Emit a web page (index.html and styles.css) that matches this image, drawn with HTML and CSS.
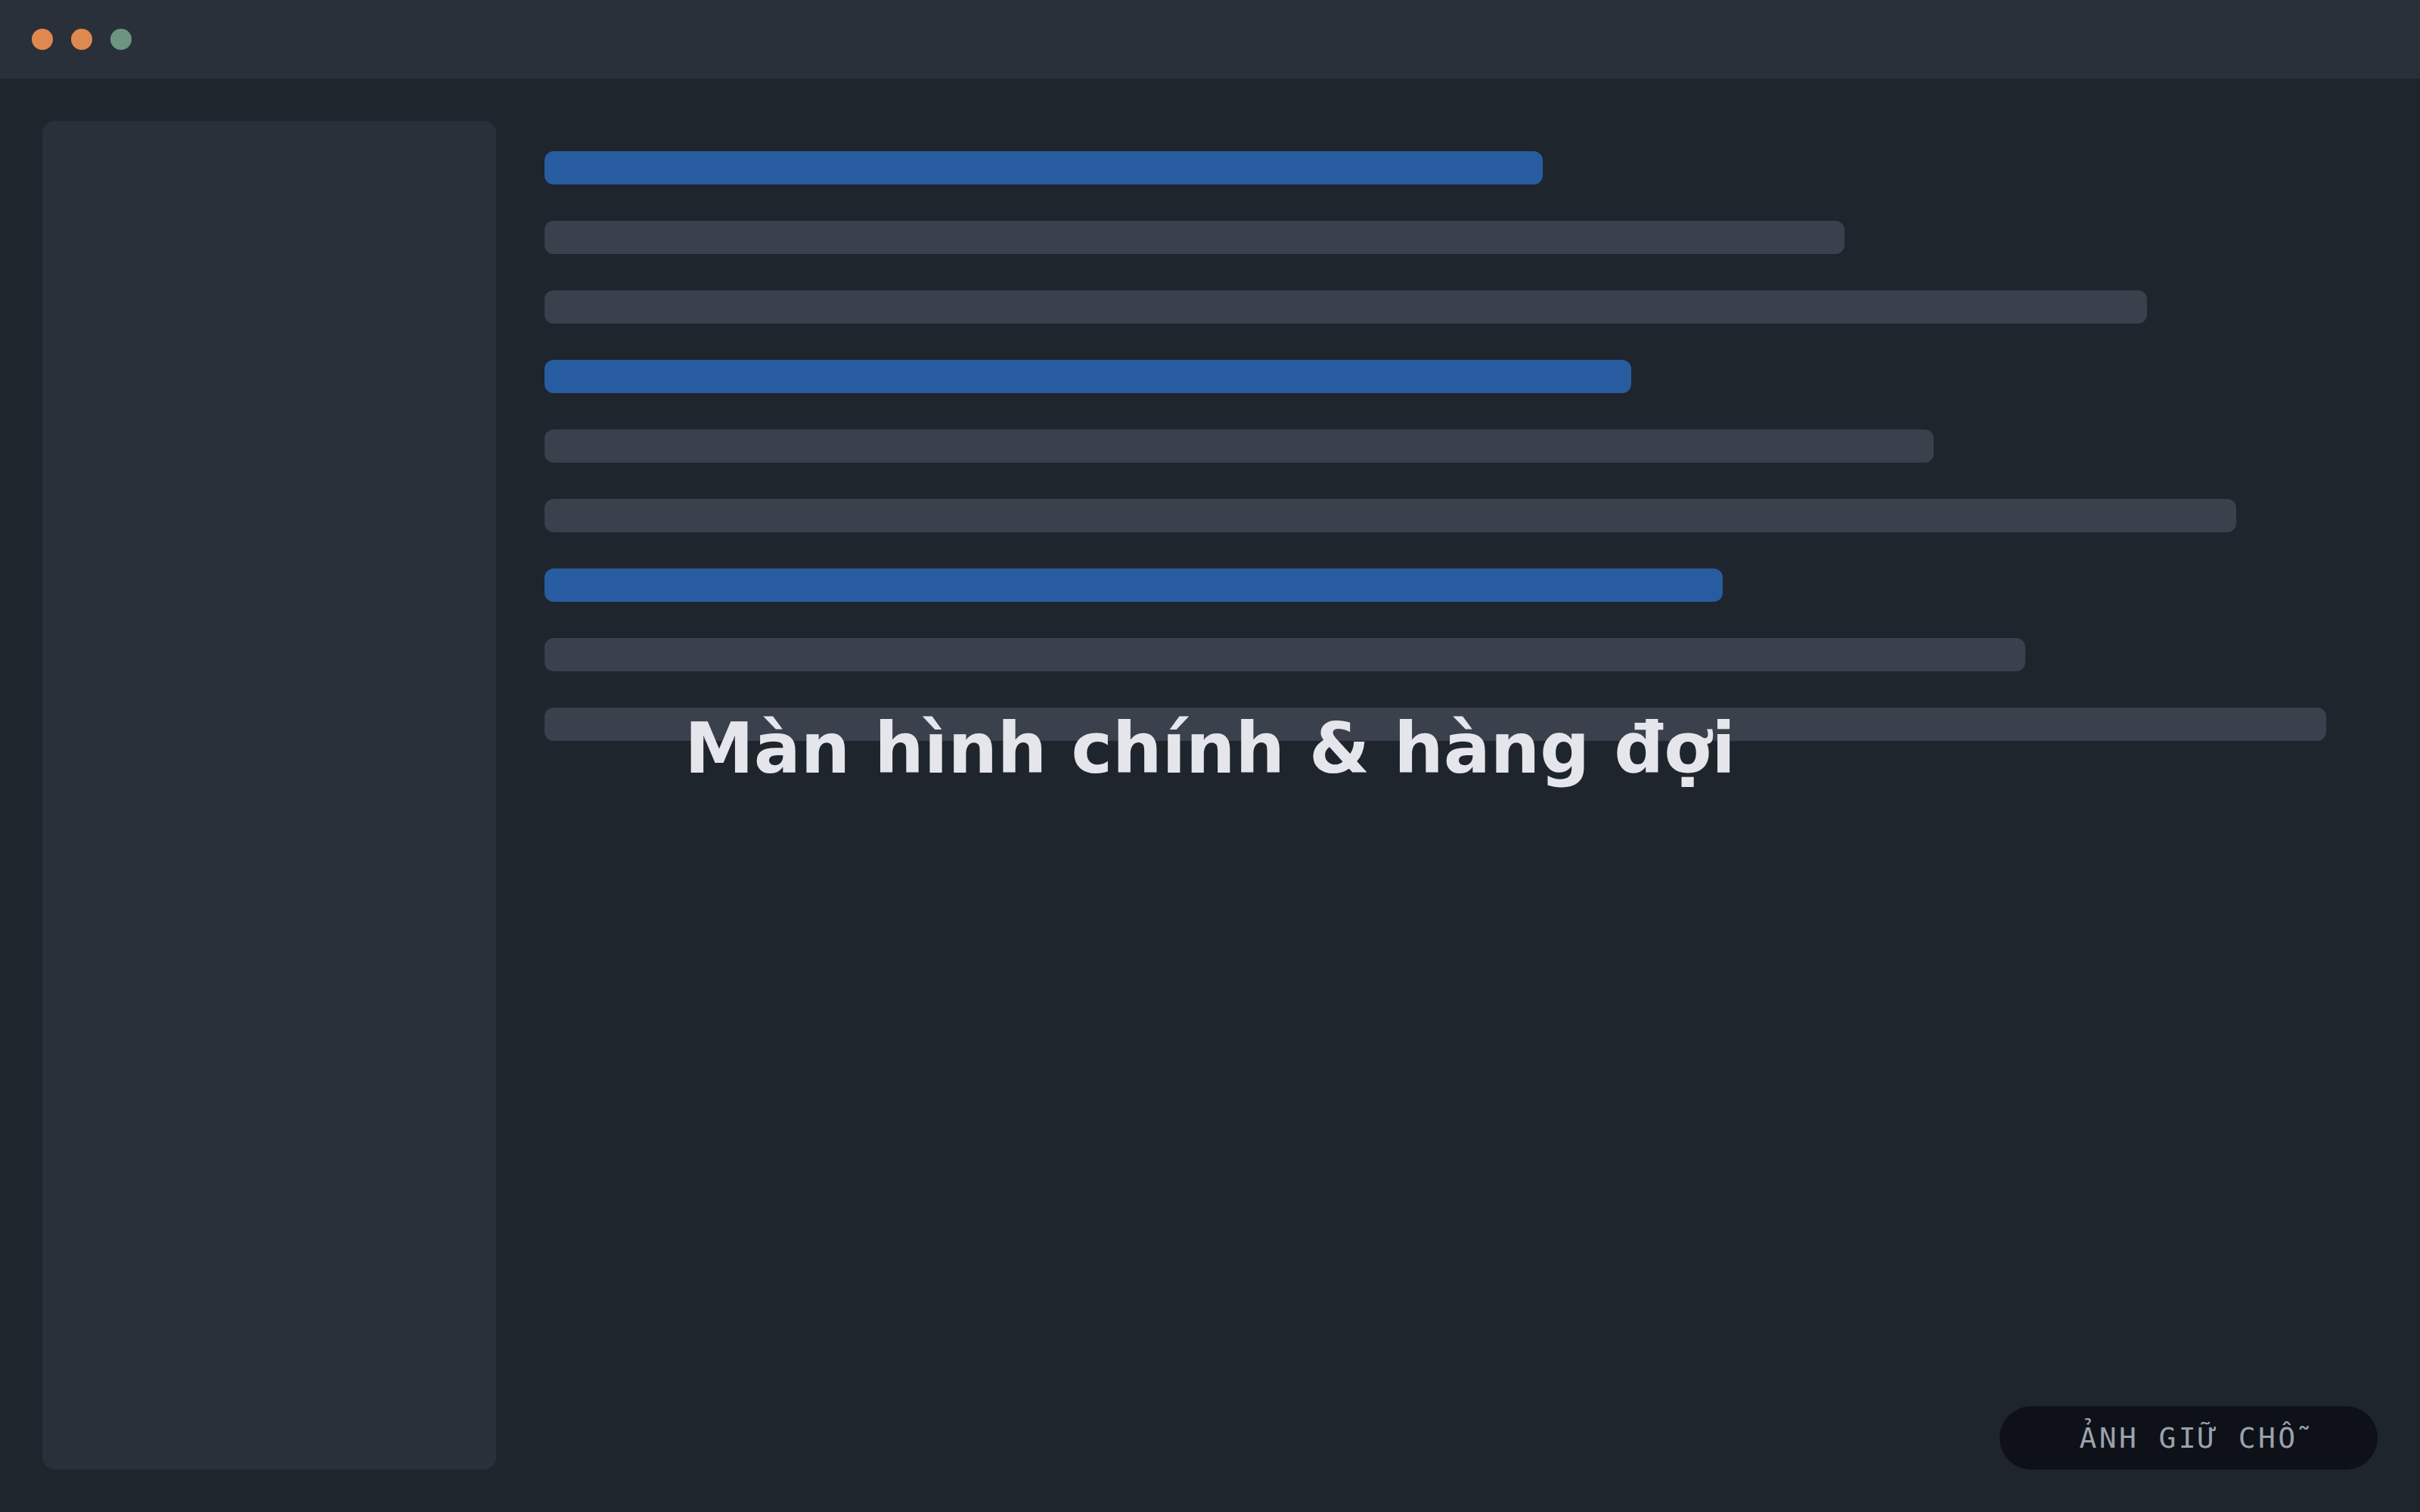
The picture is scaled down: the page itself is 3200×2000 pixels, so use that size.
FILE: index.html
```html
<!DOCTYPE html>
<html>
<head>
  <meta charset='utf-8'>
  <title>Màn hình chính & hàng đợi</title>
<link rel="stylesheet" href="styles.css">
</head>
<body>
  <div class="window">
    <div class="titlebar">
      <span class="dot dot-orange"></span>
      <span class="dot dot-orange"></span>
      <span class="dot dot-green"></span>
    </div>
    <div class="main">
      <div class="sidebar"></div>
      <div class="queue">
        <div class="bar bar-active" style="width: 1320px"></div>
        <div class="bar" style="width: 1719px"></div>
        <div class="bar" style="width: 2119px"></div>
        <div class="bar bar-active" style="width: 1437px"></div>
        <div class="bar" style="width: 1837px"></div>
        <div class="bar" style="width: 2237px"></div>
        <div class="bar bar-active" style="width: 1558px"></div>
        <div class="bar" style="width: 1958px"></div>
        <div class="bar" style="width: 2356px"></div>
      </div>
    </div>
    <h1 class="caption">Màn hình chính &amp; hàng đợi</h1>
    <div class="badge">ẢNH GIỮ CHỖ</div>
  </div>
</body>
</html>
```

FILE: styles.css
```css
body {
  margin: 0;
  background: #1f252d;
  font-family: "DejaVu Sans", "Noto Sans", sans-serif;
}
.window {
  position: relative;
  height: 100vh;
  display: flex;
  flex-direction: column;
  overflow: hidden;
}
.titlebar {
  height: 104px;
  flex-shrink: 0;
  background: #2a303a;
  display: flex;
  align-items: center;
  gap: 24px;
  padding-left: 42px;
}
.dot {
  width: 28px;
  height: 28px;
  border-radius: 50%;
}
.dot-orange {
  background: #e0894e;
}
.dot-green {
  background: #6d9480;
}
.main {
  flex: 1;
  display: flex;
  gap: 64px;
  padding: 56px;
}
.sidebar {
  width: 600px;
  flex-shrink: 0;
  background: #2a303a;
  border-radius: 16px;
}
.queue {
  flex: 1;
  display: flex;
  flex-direction: column;
  gap: 48px;
  padding-top: 40px;
}
.bar {
  height: 44px;
  background: #3a404c;
  border-radius: 12px;
}
.bar-active {
  background: #285ca0;
}
.caption {
  position: absolute;
  left: 0;
  right: 0;
  top: 927px;
  margin: 0;
  text-align: center;
  font-size: 92px;
  font-weight: bold;
  line-height: 128px;
  color: #e4e6eb;
}
.badge {
  position: absolute;
  right: 56px;
  bottom: 56px;
  width: 500px;
  height: 84px;
  border-radius: 42px;
  background: #0e1117;
  color: #9aa2ad;
  font-family: "DejaVu Sans Mono", "Liberation Mono", monospace;
  font-size: 38px;
  letter-spacing: 3.4px;
  display: flex;
  align-items: center;
  justify-content: center;
}
```
